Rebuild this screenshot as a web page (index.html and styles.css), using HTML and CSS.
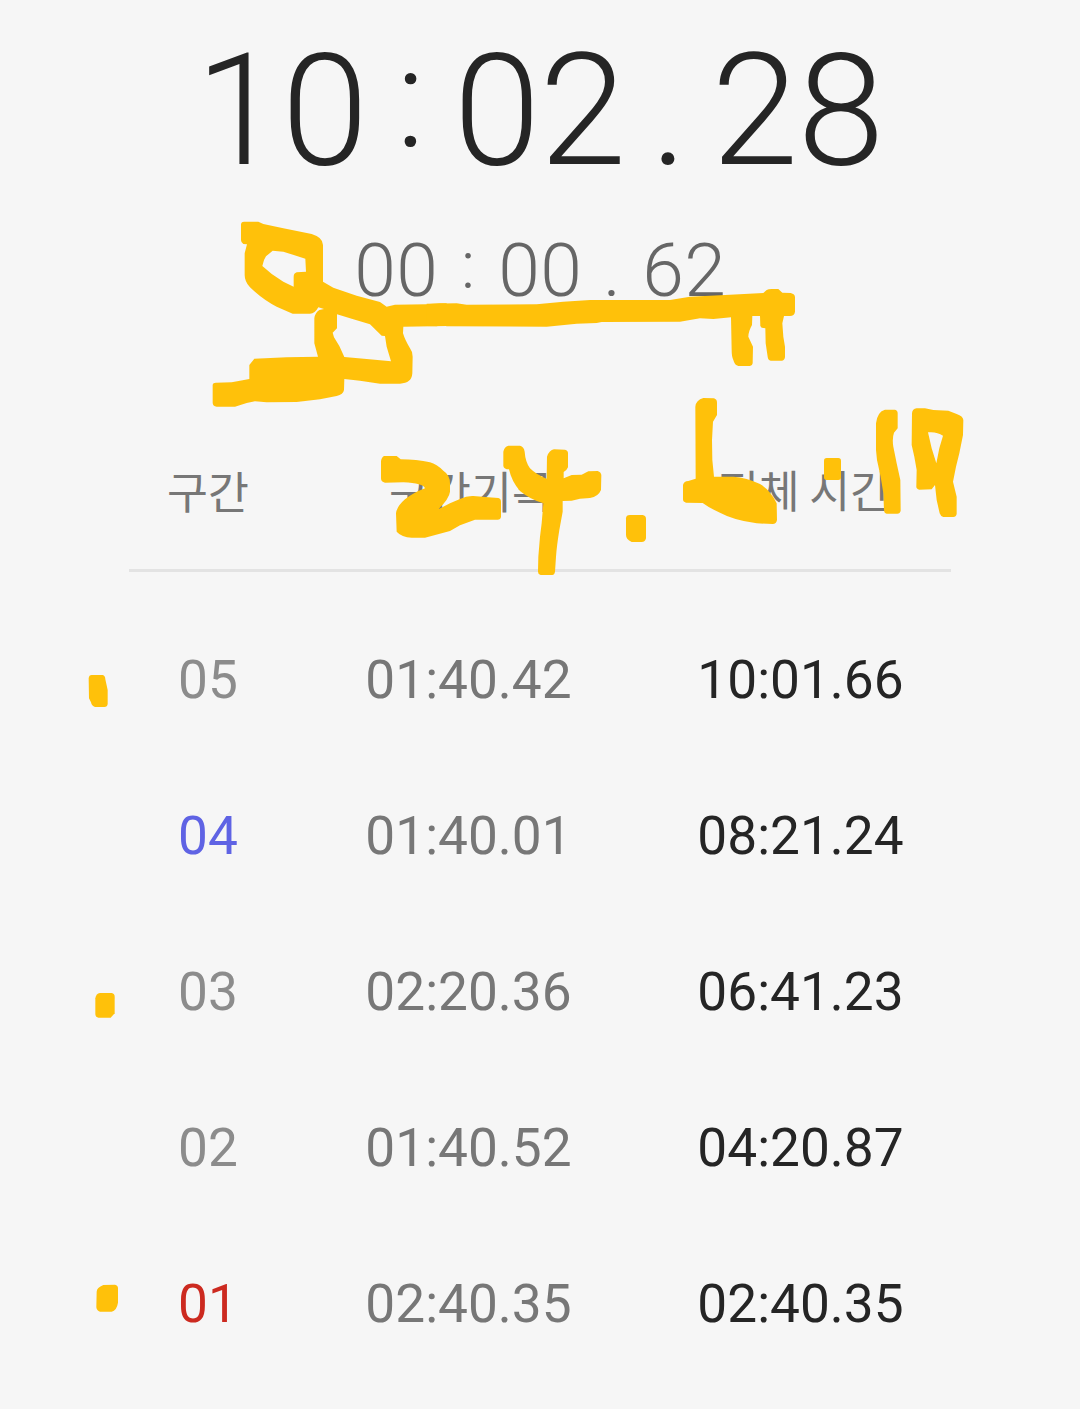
FILE: index.html
```html
<!DOCTYPE html>
<html lang="ko">
<head>
    <meta charset="UTF-8">
    <meta name="viewport" content="width=device-width, initial-scale=1.0">
    <title>스톱워치</title>
    <link rel="stylesheet" href="styles.css">
</head>
<body>

    <div class="stopwatch">
        <!-- Timers -->
        <div class="timer total">
            <span>1</span><span>0</span><span class="sep colon">:</span><span>0</span><span>2</span><span class="sep">.</span><span>2</span><span>8</span>
        </div>
        <div class="timer current">
            <span>0</span><span>0</span><span class="sep colon">:</span><span>0</span><span>0</span><span class="sep">.</span><span>6</span><span>2</span>
        </div>

        <!-- Laps -->
        <div class="laps">
            <div class="lap-head">
                <span>구간</span>
                <span class="head-split">구간기록</span>
                <span class="head-time">전체 시간</span>
            </div>
            <div class="lap">
                <span class="num">05</span>
                <span class="split">01:40.42</span>
                <span class="time">10:01.66</span>
            </div>
            <div class="lap">
                <span class="num best">04</span>
                <span class="split">01:40.01</span>
                <span class="time">08:21.24</span>
            </div>
            <div class="lap">
                <span class="num">03</span>
                <span class="split">02:20.36</span>
                <span class="time">06:41.23</span>
            </div>
            <div class="lap">
                <span class="num">02</span>
                <span class="split">01:40.52</span>
                <span class="time">04:20.87</span>
            </div>
            <div class="lap">
                <span class="num worst">01</span>
                <span class="split">02:40.35</span>
                <span class="time">02:40.35</span>
            </div>
        </div>

        <!-- Marker drawing -->
        <svg class="marker" viewBox="0 0 1080 1409" fill-rule="evenodd">
            <g transform="translate(200 210) scale(.33333)">
                <path d="M123 42Q124 35 132 35L175 35L190 42L250 55L335 72Q369 82 369 105L369 215L400 233L470 257L540 276L560 290L585 284L680 283L720 280L740 280L740 348L610 350L609 370Q615 390 630 415Q638 425 638 440L637 490Q635 520 600 521L540 521L480 512L433 507L432 540Q430 553 410 558L360 568L290 576L200 577L165 574L140 579L105 590L50 590Q38 588 38 578L38 525Q39 518 48 518L95 517L120 512L148 507L148 465L163 446L260 442L354 440L343 400L343 325Q345 308 358 300L372 297L355 292Q345 311 330 311L278 311L230 290Q190 270 150 232Q134 215 134 195L134 130L141 103L130 102Q123 98 123 90Z
                M218 122L250 125L316 146L318 185L290 187Q281 190 281 200L281 230L250 215Q215 195 187 168Q190 150 198 139Z
                M411 313L460 328L510 343L545 377L555 378L560 410L573 454L500 447L433 441L418 408L402 382L398 368L411 355Z"/>
            </g>
            <g transform="translate(430 220) scale(.33333)">
                <path d="M-10 251L80 250L110 254L320 253L400 245L480 240L720 240L780 230L900 224L1000 219L1010 210Q1015 207 1025 207L1045 207L1057 218L1082 219Q1095 222 1095 232L1095 275Q1093 288 1080 288L1062 288L1057 310L1060 350L1065 380L1065 412Q1063 422 1055 422L1022 422Q1014 420 1013 410L1007 370L1006 325L995 323L991 318L990 288L967 288L966 315Q955 335 955 350L969 380L968 430Q967 438 960 438L925 438Q914 436 910 420Q905 410 905 390L903 292L850 297L810 295L750 305L515 306L500 309L440 311L350 320L50 319L35 315L20 319L-10 318Z"/>
            </g>
            <g transform="translate(370 430) scale(.33333)">
                <path d="M33 95Q33 84 42 78L80 78L92 88Q140 88 180 97Q200 103 220 122Q240 135 240 160L240 185Q238 205 205 238L240 220L270 207Q290 197 310 198L355 202L385 204Q393 206 393 215L393 260Q392 269 383 269L315 269L270 286L240 303L165 323L125 323Q95 322 80 305L78 250Q80 230 105 208Q130 188 165 175Q160 160 100 157L45 158Q33 156 33 145Z"/>
                <path d="M400 65Q403 50 415 47L450 47Q462 50 464 65Q466 95 480 115Q500 135 530 146L531 80Q538 60 552 58L585 59Q594 61 594 70L594 112Q590 122 581 126L581 145L605 135L635 134L655 124L683 123Q693 126 694 135L693 180Q685 200 660 204L630 206L605 212L578 213L578 245L568 300Q560 350 558 380L555 425Q553 435 547 435L512 435Q504 433 504 425L505 380L510 320L515 280L520 220Q480 208 450 183Q425 155 417 118Q402 118 400 108Z"/>
                <path d="M768 265Q768 255 780 255L818 255Q828 257 828 267L828 325Q826 336 815 336L785 336Q768 328 768 315Z"/>
            </g>
            <g transform="translate(670 390) scale(.33333)">
                <path d="M76 50Q78 30 100 24L132 25Q141 28 141 38L141 75L129 95L126 150L127 210L132 260L190 260Q230 263 270 282Q300 300 320 340L321 390Q319 402 308 402L260 400Q190 390 150 368Q120 355 98 339L48 338Q39 336 39 328L39 285Q42 273 55 273L77 266Z"/>
                <rect x="462" y="204" width="51" height="66" rx="8"/>
                <path d="M618 100Q622 65 645 59L675 59Q683 61 683 70L683 115L672 128Q666 145 670 170L680 220L691 270L692 362Q690 371 682 371L650 371Q642 369 642 360L640 310L632 260L621 210L618 180Z"/>
                <path d="M726 70Q727 57 740 55L765 55L790 60L835 62L860 72Q879 78 880 90L879 135L868 190L858 230L849 275L860 320L860 372Q858 381 850 381L820 381Q812 379 809 370L800 330L795 285L785 298L748 299Q738 297 739 288L740 240L733 200L725 165Z
                M774 127Q800 124 819 137L808 175L799 220L785 175Z"/>
            </g>
            <g transform="translate(80 640) scale(.33333)">
                <path d="M26 115Q27 105 35 105L68 105Q76 107 76 118L83 150L83 192Q82 201 73 201L45 201Q35 198 33 187L27 175Z"/>
            </g>
            <g transform="translate(80 970) scale(.33333)">
                <path d="M46 85Q48 70 60 69L95 69Q104 71 104 80V130L92 143H55Q46 141 46 132Z"/>
            </g>
            <g transform="translate(80 1270) scale(.33333)">
                <path d="M50 65Q50 53 70 45L105 44Q114 46 114 55V98Q110 122 95 125H60Q50 122 49 112Z"/>
            </g>
        </svg>
    </div>

</body>
</html>
```

FILE: styles.css
```css
* { margin: 0; padding: 0; box-sizing: border-box; }
body { background: #f6f6f6; color: #252525; font-family: Roboto, "Noto Sans CJK KR", sans-serif; }

.stopwatch { position: relative; width: 1080px; height: 1409px; padding-top: 19px; overflow: hidden; }

/* Timers */
.timer { display: flex; justify-content: center; font-weight: 300; }
.timer span { display: flex; justify-content: center; }
.total { height: 184px; font-size: 156.5px; line-height: 184px; }
.total span { width: 86px; }
.total .colon { margin-top: -12px; padding-right: 1px; font-size: 139px; font-weight: 350; }
.current { height: 88px; margin-top: 23px; font-size: 75px; line-height: 88px; color: #666; }
.current span { width: 42px; }
.current .sep { width: 60px; }
.current .colon { margin-top: -5px; font-size: 67px; font-weight: 350; }

/* Laps */
.laps { width: 822px; margin: 110px auto 0; }
.lap-head, .lap { display: grid; grid-template-columns: 158px 363px 301px; align-items: center; text-align: center; }
.lap-head { height: 148px; padding-bottom: 15px; border-bottom: 3px solid #e3e3e3; font-family: "Noto Sans CJK KR", sans-serif; font-size: 44.5px; color: #777; }
.head-split { padding-left: 5px; }
.head-time { padding: 0 0 2px 8px; word-spacing: -3px; }
.lap { height: 156px; font-size: 53.2px; line-height: 62px; }
.lap-head + .lap { margin-top: 30px; }
.num { color: #8c8c8c; }
.split { color: #777; }
.best { color: #5f63e4; }
.worst { color: #cc2a20; }

/* Marker drawing */
.marker { position: absolute; top: 0; left: 0; width: 1080px; height: 1409px; fill: #ffc10a; }
```
